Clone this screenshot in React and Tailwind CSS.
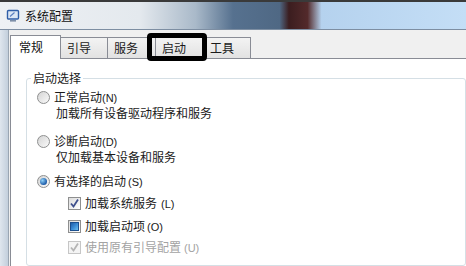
import React from 'react';

const font = { fontFamily: '"Noto Sans CJK SC", "Noto Sans", sans-serif' };

const MonitorIcon = () => (
  <svg width="14" height="14" viewBox="0 0 14 14">
    <rect x="1.5" y="1.5" width="11" height="8.5" rx="1" fill="#dbe7f5" stroke="#2f5ea8" strokeWidth="1.4" />
    <path d="M4 7.5 L8.5 3.5" stroke="#5b7fbf" strokeWidth="1.2" />
    <rect x="4" y="11" width="6" height="1.6" fill="#7d8fa8" />
  </svg>
);

const Radio = ({ checked }) => (
  <span className="w-[13px] h-[13px] rounded-full border border-[#8e8f8f] bg-gradient-to-br from-[#d4d4d4] to-[#fafafa] flex items-center justify-center shrink-0">
    {checked && (
      <span className="w-[7px] h-[7px] rounded-full bg-[radial-gradient(circle_at_35%_35%,#8fd1f8,#1b5aa8_70%)]" />
    )}
  </span>
);

const Checkbox = ({ state, disabled }) => (
  <span
    className={
      'w-[13px] h-[13px] border flex items-center justify-center shrink-0 ' +
      (disabled ? 'border-[#c6c6c6] bg-[#f4f4f4]' : 'border-[#8e8f8f] bg-gradient-to-br from-[#dcdcdc] to-[#ffffff]')
    }
  >
    {state === 'checked' && (
      <svg width="11" height="11" viewBox="0 0 11 11">
        <path d="M2 5.5 L4.5 8.5 L9 1.5" fill="none" stroke={disabled ? '#b4b4b4' : '#3e4f8c'} strokeWidth="1.8" />
      </svg>
    )}
    {state === 'mixed' && (
      <span className="w-[9px] h-[9px] bg-gradient-to-br from-[#1f5ea8] via-[#3a8ad3] to-[#6cc0ef] border border-[#1b4f8e]" />
    )}
  </span>
);

const Tab = ({ label, w }) => (
  <div
    className={`h-[21px] ${w} -mr-px pl-[6px] border border-b-0 border-[#898c95] bg-gradient-to-b from-[#f3f3f3] to-[#e2e2e2] flex items-center text-[12px] text-[#1a1a1a]`}
  >
    {label}
  </div>
);

export default function App() {
  return (
    <div className="relative w-[466px] h-[266px] overflow-hidden flex flex-col bg-white" style={font}>
      {/* title bar */}
      <div className="h-[30px] shrink-0 border-t-2 border-t-[#3a3a3a] border-b border-b-[#7d8ea2] bg-[linear-gradient(to_right,#eef1f4_0%,#e4e9ee_30%,#a9b9c9_42%,#56718f_50%,#4f6884_60%,#3b1d1f_62%,#532a2b_66%,#b5d2ee_69%,#c4def6_100%)] flex items-center pl-[6px] gap-[5px]">
        <MonitorIcon />
        <span className="text-[12px] text-[#111]">系统配置</span>
      </div>

      <div className="flex flex-1">
        {/* left frame */}
        <div className="w-[9px] shrink-0 bg-gradient-to-r from-[#dfe6ee] to-[#c3cfdc] border-r border-[#9aa6b3]" />

        <div className="flex-1 flex flex-col bg-[#f0f0f0] pl-px">
          {/* tabs */}
          <div className="h-[28px] flex items-end shrink-0">
            <div className="h-[24px] w-[51px] -mr-px -mb-px pl-[8px] pb-[2px] border border-b-0 border-[#898c95] bg-white flex items-center text-[12px] text-[#111] relative z-10">
              常规
            </div>
            <Tab label="引导" w="w-[48px]" />
            <Tab label="服务" w="w-[49px]" />
            <Tab label="启动" w="w-[49px]" />
            <Tab label="工具" w="w-[48px]" />
          </div>

          {/* panel */}
          <div className="flex-1 bg-white border-t border-l border-[#898c95] pl-[15px] pt-[11px] text-[12px] text-[#1a1a1a]">
            <fieldset className="border border-[#d5dfe5] rounded-[3px] pl-[10px] pb-[10px]">
              <legend className="-ml-[6px] px-[2px] leading-[16px]">启动选择</legend>

              <div className="flex items-center gap-[4px] h-[16px] mt-[3px]">
                <Radio />
                <span>正常启动<span className="font-['Liberation_Sans'] text-[11px]">(N)</span></span>
              </div>
              <div className="h-[16px] leading-[16px] pl-[19px]">加载所有设备驱动程序和服务</div>

              <div className="flex items-center gap-[4px] h-[16px] mt-[12px]">
                <Radio />
                <span>诊断启动<span className="font-['Liberation_Sans'] text-[11px]">(D)</span></span>
              </div>
              <div className="h-[16px] leading-[16px] pl-[19px]">仅加载基本设备和服务</div>

              <div className="flex items-center gap-[4px] h-[16px] mt-[8px]">
                <Radio checked />
                <span>有选择的启动<span className="font-['Liberation_Sans'] text-[11px] ml-[2px]">(S)</span></span>
              </div>

              <div className="pl-[31px]">
                <div className="flex items-center gap-[4px] h-[16px] mt-[6px]">
                  <Checkbox state="checked" />
                  <span>加载系统服务<span className="font-['Liberation_Sans'] text-[11px] ml-[4px]">(L)</span></span>
                </div>
                <div className="flex items-center gap-[4px] h-[16px] mt-[7px]">
                  <Checkbox state="mixed" />
                  <span>加载启动项<span className="font-['Liberation_Sans'] text-[11px] ml-[2px]">(O)</span></span>
                </div>
                <div className="flex items-center gap-[4px] h-[16px] mt-[5px] text-[#a3a3a3]">
                  <Checkbox state="checked" disabled />
                  <span>使用原有引导配置<span className="font-['Liberation_Sans'] text-[11px] ml-[3px]">(U)</span></span>
                </div>
              </div>
            </fieldset>
          </div>
        </div>
      </div>

      {/* annotation box around the 启动 tab */}
      <div className="absolute left-[147px] top-[33px] w-[60px] h-[28px] border-[5px] border-black rounded-[4px] z-20" />
    </div>
  );
}
